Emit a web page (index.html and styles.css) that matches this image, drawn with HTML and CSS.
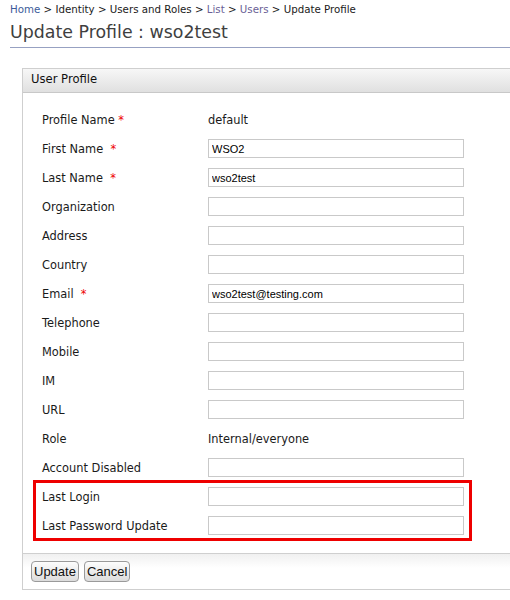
FILE: index.html
```html
<!DOCTYPE html>
<html>
<head>
<meta charset="utf-8">
<link rel="stylesheet" href="styles.css">
</head>
<body>
<div class="breadcrumb"><a class="link" href="#">Home</a> &gt; Identity &gt; Users and Roles &gt; <a class="link visited" href="#">List</a> &gt; <a class="link visited" href="#">Users</a> &gt; Update Profile</div>
<h1 class="title">Update Profile : wso2test</h1>
<div class="panel">
  <div class="panel-head">User Profile</div>
  <div class="panel-body">
    <div class="row"><span class="label">Profile Name <span class="req">*</span></span><span class="value">default</span></div>
    <div class="row"><span class="label">First Name &nbsp;<span class="req">*</span></span><input class="field" type="text" value="WSO2"></div>
    <div class="row"><span class="label">Last Name &nbsp;<span class="req">*</span></span><input class="field" type="text" value="wso2test"></div>
    <div class="row"><span class="label">Organization</span><input class="field" type="text"></div>
    <div class="row"><span class="label">Address</span><input class="field" type="text"></div>
    <div class="row"><span class="label">Country</span><input class="field" type="text"></div>
    <div class="row"><span class="label">Email &nbsp;<span class="req">*</span></span><input class="field" type="text" value="wso2test@testing.com"></div>
    <div class="row"><span class="label">Telephone</span><input class="field" type="text"></div>
    <div class="row"><span class="label">Mobile</span><input class="field" type="text"></div>
    <div class="row"><span class="label">IM</span><input class="field" type="text"></div>
    <div class="row"><span class="label">URL</span><input class="field" type="text"></div>
    <div class="row"><span class="label">Role</span><span class="value">Internal/everyone</span></div>
    <div class="row"><span class="label">Account Disabled</span><input class="field" type="text"></div>
    <div class="highlight">
      <div class="row"><span class="label">Last Login</span><input class="field" type="text"></div>
      <div class="row"><span class="label">Last Password Update</span><input class="field" type="text"></div>
    </div>
  </div>
  <div class="panel-foot">
    <button class="btn" type="button">Update</button>
    <button class="btn" type="button">Cancel</button>
  </div>
</div>
</body>
</html>
```
FILE: styles.css
```css
html, body {
  margin: 0;
  padding: 0;
  overflow: hidden;
  background: #fff;
}
body {
  font-family: "DejaVu Sans", sans-serif;
  color: #222;
  width: 510px;
}
.breadcrumb {
  font-size: 10.25px;
  line-height: 18px;
  padding-left: 10px;
  color: #1a1a1a;
  white-space: nowrap;
}
.link {
  color: #3c5b9a;
  text-decoration: none;
}
.link.visited {
  color: #6a5f96;
}
.title {
  margin: 0 0 0 10px;
  font-weight: normal;
  font-size: 17.4px;
  line-height: 28px;
  height: 29px;
  color: #3f3f3f;
  border-bottom: 1px solid #97a1c2;
}
.panel {
  margin: 20px 0 0 22px;
  width: 510px;
  border: 1px solid #cfcfcf;
  box-sizing: border-box;
}
.panel-head {
  height: 23px;
  line-height: 20px;
  padding-left: 8px;
  font-size: 11.6px;
  color: #111;
  background: linear-gradient(#f7f7f7, #e0e0e0);
  border-bottom: 1px solid #c8c8c8;
}
.panel-body {
  padding: 12px 0 13px 19px;
}
.row {
  display: flex;
  align-items: center;
  height: 29px;
}
.label {
  width: 166px;
  flex: none;
  font-size: 11.4px;
  color: #1a1a1a;
}
.req {
  color: #e00;
}
.value {
  font-size: 11.4px;
  color: #1a1a1a;
}
.field {
  width: 256px;
  height: 19px;
  box-sizing: border-box;
  margin: 0;
  border: 1px solid #c9c9c9;
  padding: 0 3px;
  font-family: "Liberation Sans", Arial, sans-serif;
  font-size: 11px;
  color: #000;
  background: #fff;
}
.highlight {
  position: relative;
}
.highlight::after {
  content: "";
  position: absolute;
  top: -2px;
  bottom: -1px;
  left: -9px;
  width: 439px;
  border: 3px solid #ee0000;
  box-sizing: border-box;
  pointer-events: none;
}
.panel-foot {
  border-top: 1px solid #cfcfcf;
  background: linear-gradient(#f0f0f0, #ffffff 14px);
  padding: 7px 8px 7px 8px;
  display: flex;
  gap: 5px;
}
.btn {
  font-family: "Liberation Sans", Arial, sans-serif;
  font-size: 13px;
  height: 21px;
  padding: 0 2px;
  color: #111;
  border: 1px solid #9a9a9a;
  border-radius: 4px;
  background: linear-gradient(#fdfdfd, #dcdcdc);
  line-height: 19px;
}
```
